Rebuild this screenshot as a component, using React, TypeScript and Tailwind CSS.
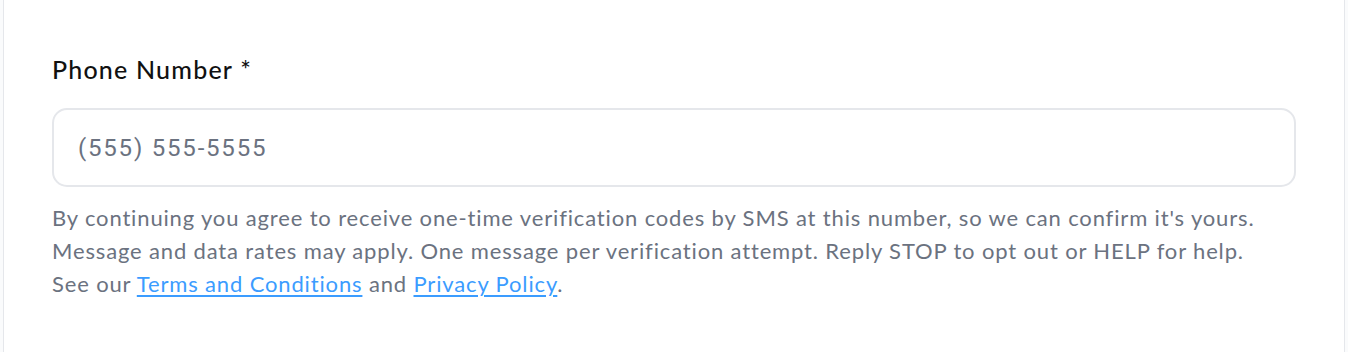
const App = () => {
  return (
    <div className="min-h-[352px] w-full bg-[#fafbfc] px-[3px]">
      <div className="min-h-[352px] border-x border-[#e5e7eb] bg-white px-[48px] pt-[51px] font-['Lato',sans-serif]">
        {/* Phone field */}
        <label
          htmlFor="phone"
          className="block text-[25px] leading-[36px] font-medium tracking-[1.2px] text-[#111111]"
        >
          Phone Number *
        </label>
        <input
          id="phone"
          type="tel"
          placeholder="(555) 555-5555"
          className="mt-[21px] block h-[79px] w-full rounded-[15px] border-2 border-[#e5e7eb] bg-white px-[24px] font-['Roboto',sans-serif] text-[24px] tracking-[1.8px] text-gray-800 placeholder:text-[#6b7280] focus:outline-none"
        />
        <p className="mt-[14px] text-[22px] leading-[33px] tracking-[0.85px] text-[#6b7280]">
          By continuing you agree to receive one-time verification codes by SMS at this number, so we can confirm it's yours.
          <br />
          Message and data rates may apply. One message per verification attempt. Reply STOP to opt out or HELP for help.
          <br />
          See our{" "}
          <a href="#" className="text-[#3b9cff] underline underline-offset-[3px]">
            Terms and Conditions
          </a>{" "}
          and{" "}
          <a href="#" className="text-[#3b9cff] underline underline-offset-[3px]">
            Privacy Policy
          </a>
          .
        </p>
      </div>
    </div>
  );
};

export default App;
